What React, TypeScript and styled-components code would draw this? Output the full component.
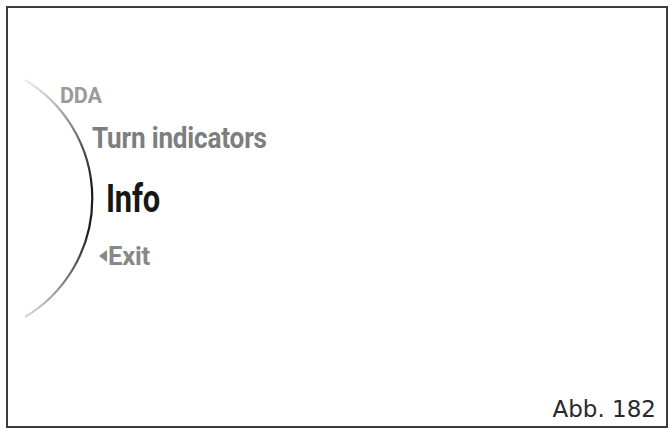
import React from "react";
import styled, { createGlobalStyle } from "styled-components";

const Global = createGlobalStyle`
  html, body {
    margin: 0;
    padding: 0;
    background: #ffffff;
  }
  body {
    font-family: Roboto, "Liberation Sans", sans-serif;
  }
`;

const Frame = styled.div`
  position: relative;
  box-sizing: border-box;
  margin: 6px 2px 0 6px;
  height: 422px;
  border: 2px solid #3c3c3c;
  display: flex;
  flex-direction: column;
  overflow: hidden;
`;

const Arc = styled.svg`
  position: absolute;
  left: 0;
  top: 0;
  pointer-events: none;
`;

const Menu = styled.ul`
  list-style: none;
  margin: 0;
  padding: 76px 0 0 0;
  display: flex;
  flex-direction: column;
  position: relative;
`;

type ItemProps = {
  $size: number;
  $indent: number;
  $gap: number;
  $color: string;
};

const Item = styled.li<ItemProps>`
  margin: ${(p) => p.$gap}px 0 0 ${(p) => p.$indent}px;
  font-family: Roboto, "Liberation Sans", sans-serif;
  font-weight: 700;
  font-size: ${(p) => p.$size}px;
  line-height: 1;
  height: ${(p) => p.$size}px;
  color: ${(p) => p.$color};
  display: flex;
  align-items: center;
  white-space: nowrap;
`;

const Label = styled.span<{ $squeeze: number }>`
  display: inline-block;
  transform: scaleX(${(p) => p.$squeeze});
  transform-origin: left center;
  letter-spacing: -0.2px;
`;

const BackArrow = styled.span`
  width: 0;
  height: 0;
  border-top: 6px solid transparent;
  border-bottom: 6px solid transparent;
  border-right: 8px solid #8a8a8a;
  margin: 0 1px 0 0;
  flex: none;
`;

const Caption = styled.div`
  margin-top: auto;
  align-self: flex-end;
  padding: 0 10px 4px 0;
  font-family: "DejaVu Sans", "Open Sans", sans-serif;
  font-weight: 400;
  font-size: 23px;
  line-height: 26px;
  color: #2a2a2a;
`;

const items = [
  { text: "DDA", size: 22.5, indent: 52, gap: 0, color: "#9b9b9b", squeeze: 0.96 },
  { text: "Turn indicators", size: 29.5, indent: 84, gap: 17.5, color: "#7e7e7e", squeeze: 0.885 },
  { text: "Info", size: 39, indent: 98, gap: 26.5, color: "#161616", squeeze: 0.79 },
];

export default function App() {
  return (
    <>
      <Global />
      <Frame>
        <Arc width="130" height="330" viewBox="8 8 130 330">
          <defs>
            <linearGradient id="arcShade" gradientUnits="userSpaceOnUse" x1="0" y1="80" x2="0" y2="317">
              <stop offset="0" stopColor="#eeeeee" />
              <stop offset="0.12" stopColor="#b0b0b0" />
              <stop offset="0.28" stopColor="#555555" />
              <stop offset="0.45" stopColor="#1c1c1c" />
              <stop offset="0.64" stopColor="#1c1c1c" />
              <stop offset="0.82" stopColor="#6e6e6e" />
              <stop offset="1" stopColor="#d8d8d8" />
            </linearGradient>
          </defs>
          <path
            d="M 25 80 A 138 138 0 0 1 25 317"
            fill="none"
            stroke="url(#arcShade)"
            strokeWidth="2.2"
          />
        </Arc>
        <Menu>
          {items.map((it) => (
            <Item
              key={it.text}
              $size={it.size}
              $indent={it.indent}
              $gap={it.gap}
              $color={it.color}
            >
              <Label $squeeze={it.squeeze}>{it.text}</Label>
            </Item>
          ))}
          <Item $size={25.5} $indent={91} $gap={24.5} $color="#888888">
            <BackArrow />
            <Label $squeeze={1.0}>Exit</Label>
          </Item>
        </Menu>
        <Caption>Abb. 182</Caption>
      </Frame>
    </>
  );
}
